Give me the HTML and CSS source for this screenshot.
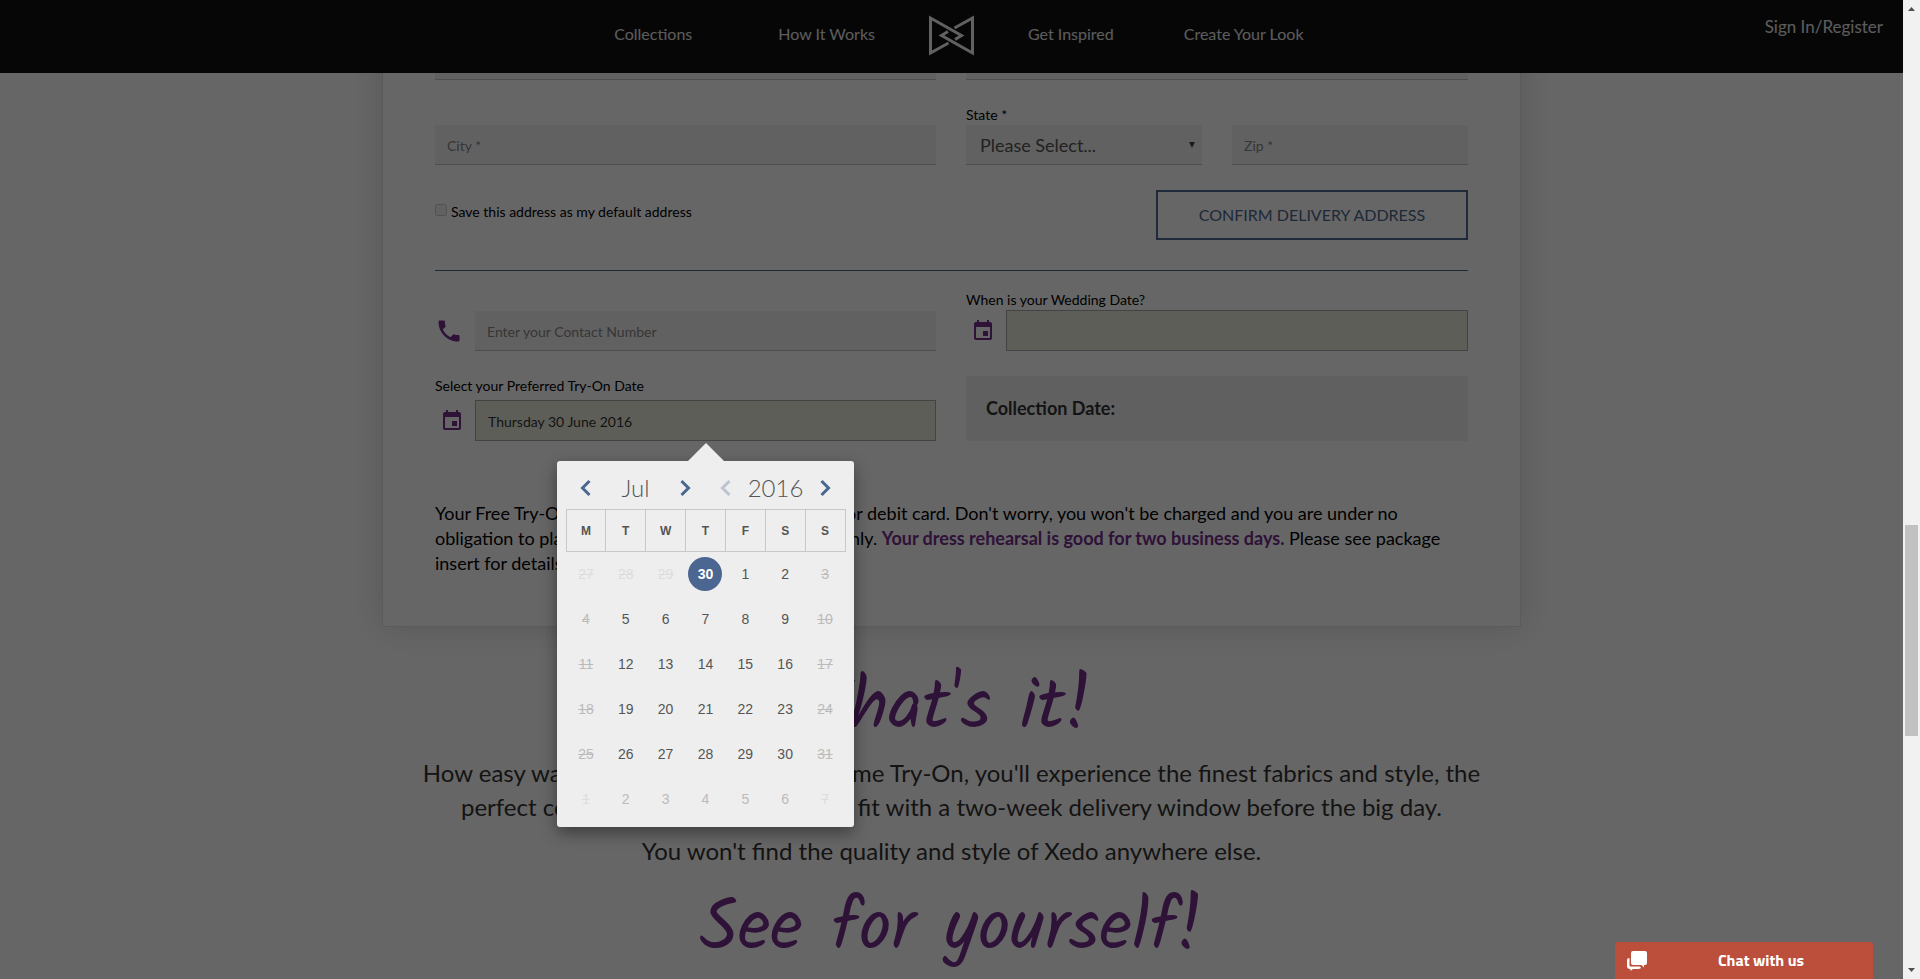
FILE: index.html
```html
<!DOCTYPE html>
<html lang="en">
<head>
<meta charset="utf-8">
<title>Xedo - Free Home Try-On</title>
<link rel="stylesheet" href="styles.css">
</head>
<body>
<div class="shell">
  <div class="page">
    <header class="topbar">
      <nav class="nav" aria-label="Main">
        <div class="nav-left">
          <a href="#">Collections</a>
          <a href="#">How It Works</a>
        </div>
        <a class="logo" href="#" aria-label="Home">
          <svg width="45" height="41" viewBox="0 0 45 41" fill="none" stroke="#f2f2f2" stroke-width="3" stroke-miterlimit="10">
            <path d="M19.500 28L1.500 38V3L32.500 20.500L26 24.500"/>
            <path d="M25.500 13L43.500 3V38L12.500 20.500L19 16.500"/>
          </svg>
        </a>
        <div class="nav-right">
          <a href="#">Get Inspired</a>
          <a href="#">Create Your Look</a>
        </div>
      </nav>
      <a class="signin" href="#">Sign In/Register</a>
    </header>

    <main>
      <form class="card">
        <div class="row">
          <input class="field" type="text" aria-label="Address line 1">
          <input class="field" type="text" aria-label="Address line 2">
        </div>
        <div class="row">
          <input class="field" type="text" aria-label="City" placeholder="City *">
          <div class="pair">
            <div class="stack">
              <label for="state">State *</label>
              <div class="select-wrap">
                <select class="field" id="state"><option>Please Select...</option></select>
                <svg class="caret" width="6" height="6" viewBox="0 0 6 6"><path d="M0 0h6L3 6z" fill="#444"/></svg>
              </div>
            </div>
            <input class="field" type="text" aria-label="Zip" placeholder="Zip *">
          </div>
        </div>
        <div class="confirm-row">
          <label class="check"><input type="checkbox">Save this address as my default address</label>
          <button class="confirm" type="button">CONFIRM DELIVERY ADDRESS</button>
        </div>
        <hr>
        <div class="row">
          <div class="icon-field">
            <svg class="phone" width="28" height="28" viewBox="0 0 24 24"><path fill="#762d8c" d="M6.620 10.790c1.440 2.830 3.760 5.140 6.590 6.590l2.200-2.200c.27-.27.67-.36 1.020-.24 1.120.37 2.330.57 3.570.57.55 0 1 .45 1 1V20c0 .55-.45 1-1 1-9.390 0-17-7.610-17-17 0-.55.45-1 1-1h3.500c.55 0 1 .45 1 1 0 1.250.2 2.450.57 3.570.11.35.03.74-.25 1.020l-2.200 2.200z"/></svg>
            <input class="field" type="tel" aria-label="Contact number" placeholder="Enter your Contact Number">
          </div>
          <div class="stack">
            <label for="wedding">When is your Wedding Date?</label>
            <div class="icon-field">
              <svg width="24" height="24" viewBox="0 0 24 24"><path fill="#762d8c" d="M17 12h-5v5h5v-5zM16 1v2H8V1H6v2H5c-1.110 0-1.990.9-1.990 2L3 19c0 1.100.89 2 2 2h14c1.100 0 2-.9 2-2V5c0-1.100-.9-2-2-2h-1V1h-2zm3 18H5V8h14v11z"/></svg>
              <input class="field date" id="wedding" type="text">
            </div>
          </div>
        </div>
        <div class="row">
          <div class="stack spaced">
            <label for="tryon">Select your Preferred Try-On Date</label>
            <div class="icon-field">
              <svg width="24" height="24" viewBox="0 0 24 24"><path fill="#762d8c" d="M17 12h-5v5h5v-5zM16 1v2H8V1H6v2H5c-1.110 0-1.990.9-1.990 2L3 19c0 1.100.89 2 2 2h14c1.100 0 2-.9 2-2V5c0-1.100-.9-2-2-2h-1V1h-2zm3 18H5V8h14v11z"/></svg>
              <div class="picker-anchor">
                <input class="field date" id="tryon" type="text" value="Thursday 30 June 2016">
                <div class="picker">
                  <div class="picker-head">
                    <button type="button" aria-label="Previous month"><svg width="11" height="18" viewBox="0 0 11 18"><path d="M9.500 2L2.500 9l7 7"/></svg></button>
                    <span>Jul</span>
                    <button type="button" aria-label="Next month"><svg width="11" height="18" viewBox="0 0 11 18"><path d="M1.500 2l7 7-7 7"/></svg></button>
                    <button type="button" aria-label="Previous year" disabled><svg width="11" height="18" viewBox="0 0 11 18"><path d="M9.500 2L2.500 9l7 7"/></svg></button>
                    <span>2016</span>
                    <button type="button" aria-label="Next year"><svg width="11" height="18" viewBox="0 0 11 18"><path d="M1.500 2l7 7-7 7"/></svg></button>
                  </div>
                  <table class="days">
                    <thead><tr><th>M</th><th>T</th><th>W</th><th>T</th><th>F</th><th>S</th><th>S</th></tr></thead>
                    <tbody>
                      <tr><td class="faint off">27</td><td class="faint off">28</td><td class="faint off">29</td><td><span class="today">30</span></td><td>1</td><td>2</td><td class="off">3</td></tr>
                      <tr><td class="off">4</td><td>5</td><td>6</td><td>7</td><td>8</td><td>9</td><td class="off">10</td></tr>
                      <tr><td class="off">11</td><td>12</td><td>13</td><td>14</td><td>15</td><td>16</td><td class="off">17</td></tr>
                      <tr><td class="off">18</td><td>19</td><td>20</td><td>21</td><td>22</td><td>23</td><td class="off">24</td></tr>
                      <tr><td class="off">25</td><td>26</td><td>27</td><td>28</td><td>29</td><td>30</td><td class="off">31</td></tr>
                      <tr><td class="faint off">1</td><td class="next">2</td><td class="next">3</td><td class="next">4</td><td class="next">5</td><td class="next">6</td><td class="faint off">7</td></tr>
                    </tbody>
                  </table>
                </div>
              </div>
            </div>
          </div>
          <div class="collection">Collection Date:</div>
        </div>
        <p class="terms">Your Free Try-On will be secured using a valid credit or debit card. Don't worry, you won't be charged and you are under no<br>obligation to place an order. This is for ID purposes only. <strong>Your dress rehearsal is good for two business days.</strong> Please see package<br>insert for details.</p>
      </form>

      <section class="closing">
        <h2>That's it!</h2>
        <p>How easy was that? During your Free Home Try-On, you'll experience the finest fabrics and style, the<br>perfect colour coordination and good fit with a two-week delivery window before the big day.</p>
        <p>You won't find the quality and style of Xedo anywhere else.</p>
        <h2>See for yourself!</h2>
      </section>
    </main>

    <div class="shade"></div>
    <button class="chat" type="button">
      <svg width="20" height="20" viewBox="0 0 20 20" fill="#fff"><path d="M6 0h12q2 0 2 2v10q0 2-2 2h-1v2.500L14.500 14H6q-2 0-2-2V2q0-2 2-2z"/><path d="M2.500 7v7.500q0 1 1 1H13L14 17q-1 1-3 1H6l-2.500 2V18H3q-3 0-3-3V9q0-2 2.500-2z"/></svg>
      <span>Chat with us</span>
    </button>
  </div>
  <div class="scrollbar">
    <svg width="7" height="4" viewBox="0 0 7 4"><path d="M0 4h7L3.500 0z" fill="#505050"/></svg>
    <div class="track"><div class="thumb"></div></div>
    <svg width="7" height="4" viewBox="0 0 7 4"><path d="M0 0h7L3.500 4z" fill="#505050"/></svg>
  </div>
</div>
</body>
</html>
```

FILE: styles.css
```css
* { box-sizing: border-box; }

body {
  margin: 0;
  overflow: hidden;
  background: #fff;
  color: #000;
  font: 14px/20px Lato, sans-serif;
}

input, select, button { font: inherit; color: inherit; border-radius: 0; margin: 0; }

.shell { display: grid; grid-template-columns: 1fr 17px; height: 100vh; }
.page { position: relative; overflow: hidden; }

/* Header */
.topbar {
  position: absolute;
  inset: 0 0 auto 0;
  z-index: 1;
  height: 73px;
  background: #111;
}
.nav {
  display: grid;
  grid-template-columns: 1fr auto 1fr;
  align-items: center;
  gap: 54px;
  height: 70px;
}
.nav a, .signin { color: #e6e6e6; font-size: 16px; text-decoration: none; white-space: nowrap; }
.nav-left, .nav-right { display: flex; padding-bottom: 2px; }
.nav-left { justify-content: flex-end; gap: 86px; }
.nav-right { gap: 70px; }
.logo { display: flex; }
.topbar .signin { position: absolute; top: 17px; right: 20px; font-size: 17px; }

/* Form card */
.card {
  max-width: 1139px;
  margin: 0 auto;
  padding: 40px 52px 50px;
  border: 1px solid #e3e3e3;
  border-top: 0;
  box-shadow: 0 0 32px rgba(0, 0, 0, .15);
}
.row {
  display: grid;
  grid-template-columns: 501fr 502fr;
  gap: 30px;
  align-items: end;
  margin-bottom: 25px;
}
.pair { display: grid; grid-template-columns: 1fr 1fr; gap: 30px; align-items: end; }
.stack { display: flex; flex-direction: column; min-width: 0; }
.spaced { gap: 4px; }
.field {
  display: block;
  width: 100%;
  height: 40px;
  padding: 2px 12px 0;
  border: 0;
  border-bottom: 1px solid #c4c4c4;
  background: #f3f3f3;
  color: #333;
}
.field::placeholder { color: #888; opacity: 1; }
.field.date { height: 41px; border: 1px solid #a9a9a9; background: #ebebdc; }
.select-wrap { position: relative; }
select.field { appearance: none; padding: 0 14px; color: #555; font-size: 18px; }
.caret { position: absolute; right: 7px; top: 17px; }

.confirm-row { display: flex; justify-content: space-between; align-items: flex-start; }
.check { display: flex; gap: 4px; padding-top: 12px; }
.check input {
  appearance: none;
  width: 12px;
  height: 12px;
  margin-top: 2px;
  border: 1px solid #d0d0d0;
  border-radius: 2px;
  background: #f3f3f3;
}
.confirm {
  width: 312px;
  height: 50px;
  border: 2px solid #4b6690;
  background: none;
  color: #4b6690;
  font-size: 16px;
}
hr { height: 1px; margin: 30px 0 19px; border: 0; background: #4b6690; }

.icon-field { display: grid; grid-template-columns: 28px 1fr; gap: 12px; align-items: center; }
.icon-field > svg { margin-left: 5px; }
.icon-field > .phone { margin-left: 0; }
.collection {
  padding: 20px;
  background: #efefef;
  color: #333;
  font-size: 18px;
  font-weight: 700;
  line-height: 25px;
}
.terms { margin: 60px 0 0; font-size: 18px; line-height: 25px; white-space: nowrap; }
.terms strong { color: #762d8c; }

/* Date picker */
.picker-anchor { position: relative; }
.picker {
  position: absolute;
  z-index: 3;
  top: 61px;
  left: 50%;
  width: 297px;
  margin-left: -149px;
  padding: 8px 8px 5px 9px;
  border-radius: 3px;
  background: #eee;
  color: #555;
  box-shadow: 0 6px 16px rgba(0, 0, 0, .4);
}
.picker::before {
  content: "";
  position: absolute;
  left: 50%;
  bottom: 100%;
  margin-left: -17px;
  border: 18px solid transparent;
  border-top: 0;
  border-bottom-color: #eee;
}
.picker-head { display: grid; grid-template-columns: 40px 60px 40px 40px 60px 40px; height: 40px; }
.picker-head span { font-size: 24px; font-weight: 300; line-height: 38px; text-align: center; }
.picker-head button { display: grid; place-items: center; height: 38px; padding: 0; border: 0; background: none; }
.picker-head svg { fill: none; stroke: #4b6690; stroke-width: 3px; }
.picker-head button:disabled { opacity: .3; }
.days { width: 100%; border-collapse: collapse; table-layout: fixed; font-family: "Liberation Sans", Arial, sans-serif; text-align: center; }
.days th { height: 42px; padding: 0; border: 1px solid #c8c8c8; font-size: 12px; }
.days td { height: 45px; padding: 0; }
.off { color: #bbb; text-decoration: line-through; }
.next { color: #bbb; }
.faint { color: #ddd; }
.today {
  display: block;
  width: 34px;
  margin: 0 auto;
  border-radius: 50%;
  background: #4b6690;
  color: #fff;
  font-weight: 700;
  line-height: 34px;
}

/* Closing copy */
.closing { padding-top: 39px; color: #333; font-size: 24px; line-height: 34px; text-align: center; white-space: nowrap; }
.closing h2 {
  margin: 0 0 4px;
  color: #762d8c;
  font: 400 72px/86px Kalam, cursive;
}
.closing p { margin: 0 0 10px; }
.closing p + h2 { margin-top: 19px; }

/* Modal shade: everything but the picker sits under it */
.shade { position: absolute; inset: 0; z-index: 2; background: rgba(0, 0, 0, .6); pointer-events: none; }

.chat {
  position: absolute;
  right: 30px;
  bottom: 0;
  z-index: 4;
  display: grid;
  grid-template-columns: 20px 1fr;
  align-items: center;
  width: 258px;
  height: 37px;
  padding: 0 12px;
  border: 0;
  border-radius: 3px 3px 0 0;
  background: #bc4f3c;
  color: #fff;
  font: 700 16px/20px "Titillium Web", Roboto, sans-serif;
}
.chat span { padding: 0 0 2px 14px; }

.scrollbar { display: flex; flex-direction: column; align-items: center; padding: 7px 0; background: #f1f1f1; }
.track { flex: 1; width: 13px; }
.thumb { height: 22%; margin-top: 514px; background: #c1c1c1; }
```
